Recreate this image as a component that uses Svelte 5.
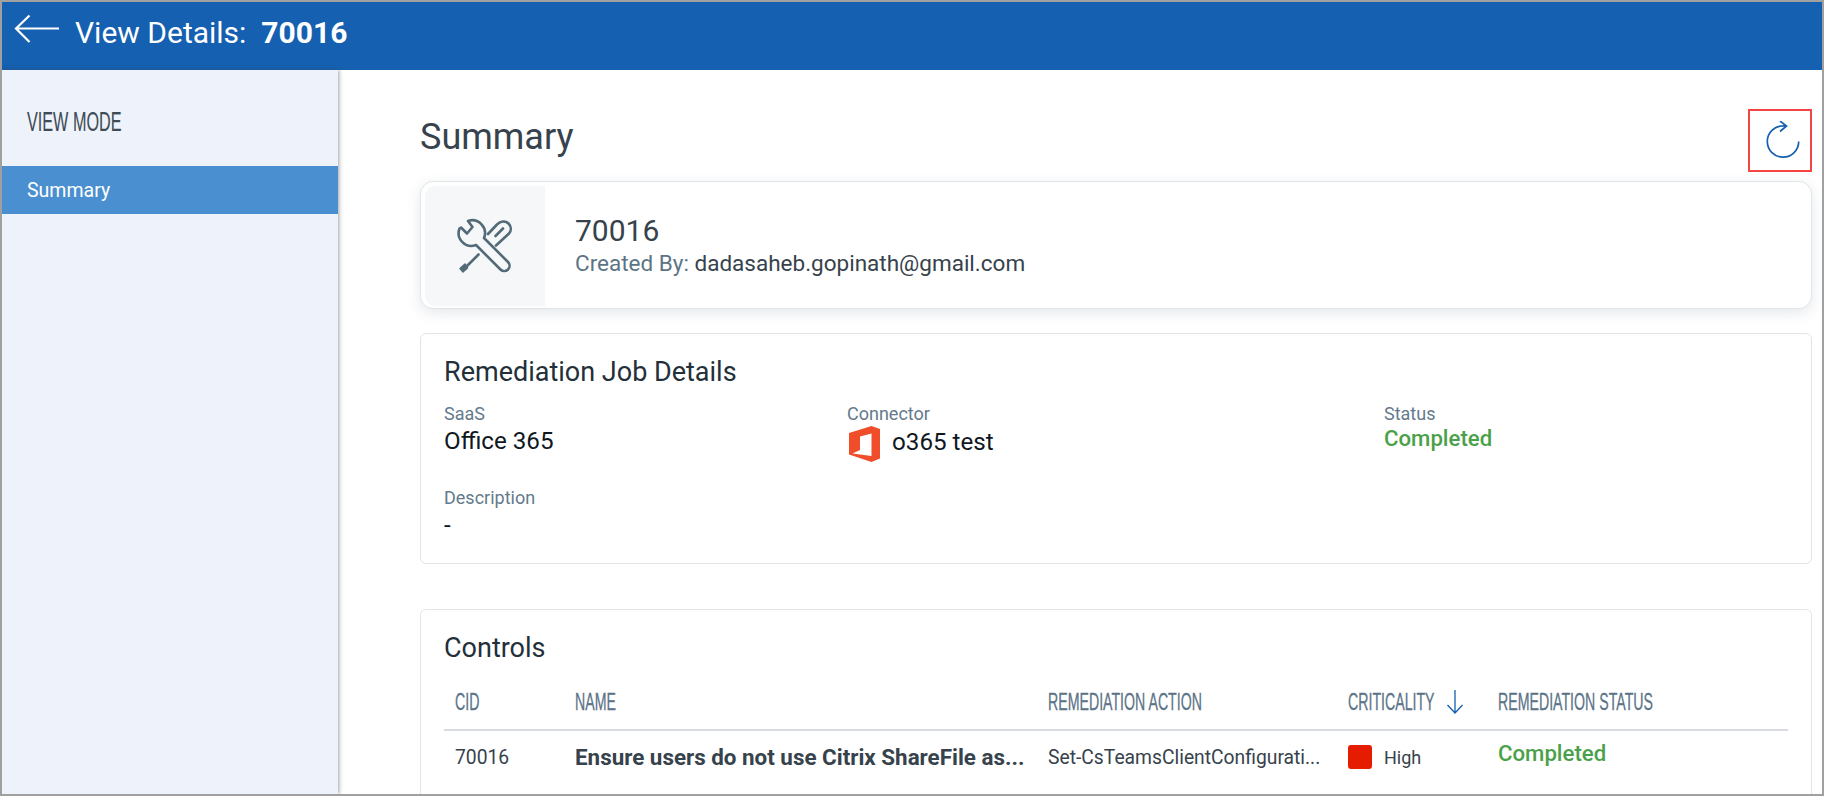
<script>
  const columns = ['CID', 'NAME', 'REMEDIATION ACTION', 'CRITICALITY', 'REMEDIATION STATUS'];
</script>

<div class="frame">
  <header class="topbar">
    <svg class="back" viewBox="0 0 46 30" width="46" height="30" aria-hidden="true">
      <path d="M45 14.500H2M15.500 1.500 2 14.500 15.500 28" fill="none" stroke="#fff" stroke-width="2.200" />
    </svg>
    <h1>View Details:<b>70016</b></h1>
  </header>
  <div class="body">
    <aside class="side">
      <div class="side-title"><span class="osw">VIEW MODE</span></div>
      <div class="side-item">Summary</div>
    </aside>
    <main class="main">
      <div class="title-row">
        <h2>Summary</h2>
        <button class="refresh" aria-label="Refresh">
          <svg viewBox="0 0 40 40" width="40" height="40" aria-hidden="true">
            <path d="M35.700 20.500A15.700 15.700 0 1 1 20 4.800L23 4.600M17 0 23.500 5 17 10.500" fill="none" stroke="#1560b0" stroke-width="1.700" />
          </svg>
        </button>
      </div>

      <section class="card hero">
        <div class="hero-icon">
          <svg viewBox="40 40 70 70" width="70" height="70" aria-hidden="true">
            <g fill="none" stroke="#536b78" stroke-width="2.600" stroke-linejoin="round" stroke-linecap="round">
              <path d="M58 50 62.500 56 57 62.500 51 56.500 49.500 57.500A12.800 12.800 0 0 0 66 74L90.500 98.500A5.300 5.300 0 0 0 98 91L74 67A12.800 12.800 0 0 0 58 50Z" />
              <path d="M78 63 87 53.500C90.500 50 95.500 49.500 98.500 52.500 101.500 55.500 101.500 59.500 99 62.500L86 74.500M85.500 65 93 57.500" />
              <path d="M68.500 83.500 57 95" />
            </g>
            <path d="M50 97.500 55 93 57.500 97 53 101Z" fill="#536b78" stroke="#536b78" stroke-width="1.500" stroke-linejoin="round" />
          </svg>
        </div>
        <div class="hero-text">
          <div class="hero-id">70016</div>
          <div class="hero-by">Created By: <span>dadasaheb.gopinath@gmail.com</span></div>
        </div>
      </section>

      <section class="card details">
        <h3>Remediation Job Details</h3>
        <div class="fields">
          <div class="field">
            <div class="label">SaaS</div>
            <div class="value">Office 365</div>
          </div>
          <div class="field">
            <div class="label">Connector</div>
            <div class="value connector">
              <svg viewBox="0 0 31 36" width="31" height="36" aria-hidden="true">
                <path fill-rule="evenodd" fill="#f04e2b" d="M0 7 22.500 0 31 3V32.500L22.500 36 0 28.500ZM11 10.500 22.500 7.500V30L3.500 27.500 11 24Z" />
              </svg>
              <span>o365 test</span>
            </div>
          </div>
          <div class="field">
            <div class="label">Status</div>
            <div class="status">Completed</div>
          </div>
          <div class="field desc">
            <div class="label">Description</div>
            <div class="value">-</div>
          </div>
        </div>
      </section>

      <section class="card controls">
        <h3>Controls</h3>
        <div class="table">
          <div class="thead">
            {#each columns as c}
              <div class="th">
                <span class="osw">{c}</span>
                {#if c === 'CRITICALITY'}
                  <svg class="sort" viewBox="0 0 18 24" width="18" height="24" aria-hidden="true">
                    <path d="M9 0V23M1.500 15 9 23 16.500 15" fill="none" stroke="#1560b0" stroke-width="1.300" />
                  </svg>
                {/if}
              </div>
            {/each}
          </div>
          <div class="tr">
            <div class="td">70016</div>
            <div class="td name">Ensure users do not use Citrix ShareFile as...</div>
            <div class="td">Set-CsTeamsClientConfigurati...</div>
            <div class="td crit"><i></i>High</div>
            <div class="td status">Completed</div>
          </div>
        </div>
      </section>
    </main>
  </div>
</div>

<style>
  :global(body) { margin: 0; background: #fff; }
  * { box-sizing: border-box; }
  .frame {
    width: 1824px; height: 796px; border: 2px solid #a0a0a0; overflow: hidden;
    display: flex; flex-direction: column;
    font-family: Roboto, "Liberation Sans", sans-serif; color: #36424c; background: #fff;
  }
  .osw {
    display: inline-block; font-family: "Liberation Sans Narrow", "Liberation Sans", sans-serif;
    transform: scaleX(.59); transform-origin: left center; white-space: nowrap;
    -webkit-text-stroke: .3px currentColor;
  }
  .side-title .osw { -webkit-text-stroke: .1px currentColor; transform: scaleX(.6); }
  .topbar {
    flex: none; height: 68px; background: #1560b0; display: flex; align-items: center; padding-left: 12px; gap: 15px;
  }
  .back { margin-top: -15px; }
  h1 { margin: -6px 0 0; font-size: 30px; font-weight: 400; color: #fff; line-height: 60px; }
  h1 b { font-weight: 700; margin-left: 15px; }
  .body { flex: 1; min-height: 0; display: flex; }
  .side {
    flex: none; width: 336px; background: #eef2fa; box-shadow: 1px 0 4px rgba(60,70,90,.5); position: relative;
  }
  .side-title { height: 96px; padding: 36px 0 0 25px; font-size: 27px; line-height: 32px; color: #3d4b55; }
  .side-item { height: 48px; background: #4a90d0; color: #fff; font-size: 19.500px; line-height: 50px; padding-left: 25px; }
  .main { flex: 1; min-width: 0; padding: 39px 10px 0 82px; }
  .title-row { display: flex; justify-content: space-between; height: 63px; margin-bottom: 9px; }
  h2 { margin: 0; font-size: 36px; font-weight: 400; line-height: 56px; color: #36424c; }
  .refresh {
    width: 64px; height: 63px; border: 2px solid #f44545; background: #fff; padding: 0 0 0 13px; margin: 0;
    display: flex; align-items: center;
  }
  .card { border: 1px solid #e2e4e7; border-radius: 6px; background: #fff; }
  .hero {
    height: 128px; padding: 4px; display: flex; border-radius: 13px; border-color: #e1e5ea;
    box-shadow: 0 4px 14px rgba(70,90,110,.14); margin-bottom: 24px;
  }
  .hero-icon {
    flex: none; width: 120px; height: 120px; background: #f5f7f9; border-radius: 10px 0 0 10px;
    display: flex; align-items: center; justify-content: center;
  }
  .hero-text { padding: 27px 0 0 30px; }
  .hero-id { font-size: 30px; line-height: 36px; color: #36424c; }
  .hero-by { font-size: 22.500px; line-height: 28px; color: #5d7485; }
  .hero-by span { color: #36424c; }
  .details { height: 231px; padding: 21px 23px; margin-bottom: 45px; }
  h3 { margin: 0; font-size: 27px; font-weight: 400; line-height: 34px; color: #23303a; }
  .fields { display: grid; grid-template-columns: 403px 537px 1fr; margin-top: 14px; }
  .label { font-size: 18px; line-height: 22px; color: #647a8c; }
  .value { font-size: 24.200px; line-height: 32px; color: #10181f; }
  .connector { display: flex; align-items: center; gap: 12px; margin: 1px 0 -1px 2px; height: 36px; }
  .connector span { margin-top: -4px; }
  .status { font-size: 22.200px; font-weight: 500; line-height: 26px; color: #4aa14a; }
  .desc { grid-column: 1 / -1; margin-top: 26px; }
  .controls { height: 260px; padding: 21px 23px; }
  .table { margin-top: 19px; }
  .thead, .tr { display: grid; grid-template-columns: 120px 473px 300px 150px 1fr; padding-left: 11px; }
  .thead { height: 47px; border-bottom: 2px solid #d8dce0; align-items: center; padding-bottom: 9px; }
  .th { font-size: 24px; color: #5b7488; display: flex; align-items: center; white-space: nowrap; }
  .sort { margin-left: -49px; }
  .tr { height: 52px; align-items: center; }
  .td { font-size: 19.300px; color: #36424c; white-space: nowrap; }
  .name { font-size: 22.400px; font-weight: 700; }
  .crit { display: flex; align-items: center; gap: 12px; font-size: 18px; }
  .crit i { width: 24px; height: 24px; background: #e61c00; border-radius: 3px; }
  .td.status { font-size: 22.200px; margin-top: -8px; color: #4aa14a; font-weight: 500; }
</style>
